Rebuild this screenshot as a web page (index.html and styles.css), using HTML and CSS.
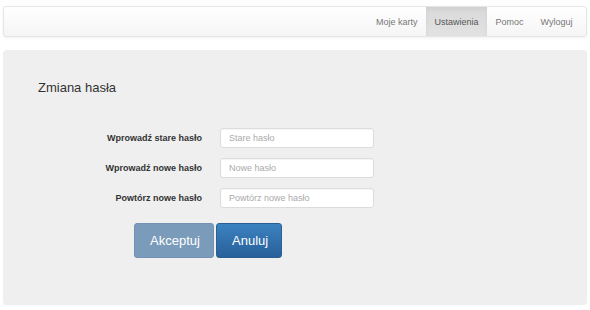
FILE: index.html
```html
<!DOCTYPE html>
<html lang="pl">
<head>
    <meta charset="UTF-8">
    <meta name="viewport" content="width=device-width, initial-scale=1.0">
    <title>Zmiana hasła</title>
    <link rel="stylesheet" href="styles.css">
</head>
<body>
    <nav class="navbar">
        <a href="#karty">Moje karty</a>
        <a href="#ustawienia" class="active">Ustawienia</a>
        <a href="#pomoc">Pomoc</a>
        <a href="#wyloguj">Wyloguj</a>
    </nav>
    <div class="jumbotron">
        <h2>Zmiana hasła</h2>
        <form class="form">
            <label for="old">Wprowadź stare hasło</label>
            <input type="password" id="old" placeholder="Stare hasło">
            <label for="new">Wprowadź nowe hasło</label>
            <input type="password" id="new" placeholder="Nowe hasło">
            <label for="repeat">Powtórz nowe hasło</label>
            <input type="password" id="repeat" placeholder="Powtórz nowe hasło">
        </form>
        <div class="buttons">
            <button class="btn btn-disabled" disabled>Akceptuj</button>
            <button class="btn btn-primary">Anuluj</button>
        </div>
    </div>
</body>
</html>
```

FILE: styles.css
```css
body {
    font-family: "Liberation Sans", Arial, sans-serif;
    margin: 0;
    padding: 6px 3px 0;
    background-color: #fff;
    color: #333;
}
.navbar {
    display: flex;
    justify-content: flex-end;
    height: 29px;
    padding-right: 5px;
    background: linear-gradient(to bottom, #fff 0%, #f5f5f5 100%);
    border: 1px solid #e6e6e6;
    border-radius: 3px;
    box-shadow: 0 1px 3px rgba(0, 0, 0, 0.06);
}
.navbar a {
    display: flex;
    align-items: center;
    padding: 0 8.5px;
    font-size: 9px;
    color: #777;
    text-decoration: none;
}
.navbar a.active {
    color: #555;
    background: linear-gradient(to bottom, #d9d9d9 0%, #e2e2e2 100%);
    box-shadow: inset 0 2px 4px rgba(0, 0, 0, 0.05);
}
.jumbotron {
    margin-top: 13px;
    height: 225px;
    padding: 30px 35px 0;
    background-color: #efefef;
    border-radius: 4px;
}
.jumbotron h2 {
    margin: 0;
    font-size: 13px;
    line-height: 16px;
    font-weight: normal;
    color: #333;
}
.form {
    display: grid;
    grid-template-columns: 164px 154px;
    column-gap: 18px;
    row-gap: 10px;
    margin-top: 32px;
    align-items: center;
}
.form label {
    text-align: right;
    font-size: 9px;
    font-weight: bold;
    color: #333;
}
.form input {
    box-sizing: border-box;
    height: 20px;
    padding: 0 8px;
    font-family: inherit;
    font-size: 9px;
    color: #555;
    background-color: #fff;
    border: 1px solid #dcdcdc;
    border-radius: 3px;
    box-shadow: inset 0 1px 1px rgba(0, 0, 0, 0.04);
}
.form input::placeholder {
    color: #aaa;
}
.buttons {
    display: flex;
    gap: 2px;
    margin: 15px 0 0 96px;
}
.btn {
    height: 35px;
    padding: 0 15px;
    font-family: inherit;
    font-size: 13px;
    color: #fff;
    border-radius: 3px;
}
.btn-disabled {
    width: 80px;
    background-color: #7b9bbb;
    border: 1px solid #7192b4;
}
.btn-primary {
    width: 66px;
    background: linear-gradient(to bottom, #3b82c0 0%, #28609a 100%);
    border: 1px solid #2a5f93;
    cursor: pointer;
}
```
